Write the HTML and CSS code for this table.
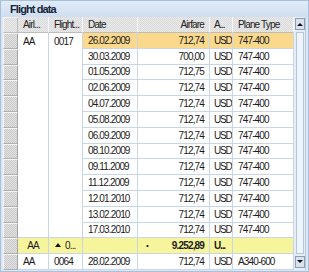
FILE: index.html
```html
<!DOCTYPE html>
<html lang="en">
<head>
    <meta charset="UTF-8">
    <title>Flight data</title>
    <link rel="stylesheet" href="styles.css">
</head>
<body>
    <div class="panel">
        <div class="panel-title">Flight data</div>

        <div class="grid">
            <!-- vertical scrollbar, spans the whole grid height -->
            <div class="vscroll">
                <div class="sb-btn"><span class="arrow-up"></span></div>
                <div class="sb-track"><div class="sb-thumb"></div></div>
                <div class="sb-btn"><span class="arrow-down"></span></div>
            </div>

            <!-- header -->
            <div class="sel sel-hd"></div>
            <div class="hd">Airl...</div>
            <div class="hd">Flight...</div>
            <div class="hd">Date</div>
            <div class="hd num">Airfare</div>
            <div class="hd cur">A...</div>
            <div class="hd">Plane Type</div>

            <!-- group AA 0017 -->
            <div class="sel"></div>
            <div class="cell grp">AA</div>
            <div class="cell grp">0017</div>
            <div class="cell selected">26.02.2009</div>
            <div class="cell num selected">712,74</div>
            <div class="cell cur selected">USD</div>
            <div class="cell selected">747-400</div>

            <div class="sel"></div>
            <div class="cell">30.03.2009</div>
            <div class="cell num">700,00</div>
            <div class="cell cur">USD</div>
            <div class="cell">747-400</div>

            <div class="sel"></div>
            <div class="cell">01.05.2009</div>
            <div class="cell num">712,75</div>
            <div class="cell cur">USD</div>
            <div class="cell">747-400</div>

            <div class="sel"></div>
            <div class="cell">02.06.2009</div>
            <div class="cell num">712,74</div>
            <div class="cell cur">USD</div>
            <div class="cell">747-400</div>

            <div class="sel"></div>
            <div class="cell">04.07.2009</div>
            <div class="cell num">712,74</div>
            <div class="cell cur">USD</div>
            <div class="cell">747-400</div>

            <div class="sel"></div>
            <div class="cell">05.08.2009</div>
            <div class="cell num">712,74</div>
            <div class="cell cur">USD</div>
            <div class="cell">747-400</div>

            <div class="sel"></div>
            <div class="cell">06.09.2009</div>
            <div class="cell num">712,74</div>
            <div class="cell cur">USD</div>
            <div class="cell">747-400</div>

            <div class="sel"></div>
            <div class="cell">08.10.2009</div>
            <div class="cell num">712,74</div>
            <div class="cell cur">USD</div>
            <div class="cell">747-400</div>

            <div class="sel"></div>
            <div class="cell">09.11.2009</div>
            <div class="cell num">712,74</div>
            <div class="cell cur">USD</div>
            <div class="cell">747-400</div>

            <div class="sel"></div>
            <div class="cell">11.12.2009</div>
            <div class="cell num">712,74</div>
            <div class="cell cur">USD</div>
            <div class="cell">747-400</div>

            <div class="sel"></div>
            <div class="cell">12.01.2010</div>
            <div class="cell num">712,74</div>
            <div class="cell cur">USD</div>
            <div class="cell">747-400</div>

            <div class="sel"></div>
            <div class="cell">13.02.2010</div>
            <div class="cell num">712,74</div>
            <div class="cell cur">USD</div>
            <div class="cell">747-400</div>

            <div class="sel"></div>
            <div class="cell">17.03.2010</div>
            <div class="cell num">712,74</div>
            <div class="cell cur">USD</div>
            <div class="cell">747-400</div>

            <!-- subtotal row -->
            <div class="sel"></div>
            <div class="cell sum center">AA</div>
            <div class="cell sum"><span class="tri"></span>0...</div>
            <div class="cell sum"></div>
            <div class="cell sum total"><span class="dot">&bull;</span><b>9.252,89</b></div>
            <div class="cell sum cur"><b>U...</b></div>
            <div class="cell sum"></div>

            <!-- next group -->
            <div class="sel"></div>
            <div class="cell">AA</div>
            <div class="cell">0064</div>
            <div class="cell">28.02.2009</div>
            <div class="cell num">712,74</div>
            <div class="cell cur">USD</div>
            <div class="cell">A340-600</div>
        </div>
    </div>
</body>
</html>
```

FILE: styles.css
```css
body {
    margin: 0;
    background: #fff;
    font-family: "Liberation Sans", Arial, sans-serif;
    font-size: 10px;
    letter-spacing: -0.85px;
    color: #1b1b1b;
}

.panel {
    width: 309px;
    box-sizing: border-box;
    border: 1px solid #a9c0dd;
    background: #dde7f4;
    padding: 0 2px 1px;
}

.panel-title {
    height: 16px;
    line-height: 16px;
    margin: 0 -2px;
    padding-left: 9px;
    background: linear-gradient(#e1ebf7, #cfdef1);
    font-size: 11px;
    font-weight: bold;
    letter-spacing: -0.9px;
    color: #17243a;
}

.grid {
    display: grid;
    grid-template-columns: 15px 31px 34px 55px 72px 23px 61px 12px;
    grid-template-rows: 16px repeat(15, 15.8px);
    background: #fff;
}

.grid > div {
    box-sizing: border-box;
    overflow: hidden;
    white-space: nowrap;
}

.cell,
.hd {
    display: flex;
    align-items: center;
    padding: 0 5px;
    border-right: 1px solid #c8d6e8;
    border-bottom: 1px solid #c8d6e8;
}

.hd {
    background-color: #e3e3e3;
    background-image: repeating-conic-gradient(#d9d9d9 0 25%, #ebebeb 0 50%);
    background-size: 2px 2px;
    border-right-color: #f6f6f6;
    border-bottom-color: #bdbdbd;
    color: #222;
}

.num {
    justify-content: flex-end;
}

.cur {
    padding: 0 0 0 4px;
    letter-spacing: -1.15px;
}

.center {
    justify-content: center;
}

.grp {
    grid-row: span 13;
    align-items: flex-start;
    padding-top: 3px;
}

.selected {
    background: #fad98c;
}

.sum {
    background: #f7f59c;
}

.total {
    justify-content: space-between;
    padding-left: 8px;
}

.dot {
    font-size: 8px;
}

.tri {
    width: 0;
    height: 0;
    border-left: 3px solid transparent;
    border-right: 3px solid transparent;
    border-bottom: 4px solid #111;
    margin: 0 4px 1px 1px;
}

/* row selector buttons */
.sel {
    border: 1px solid;
    border-color: #f5f5f5 #a4a4a4 #b0b0b0 #f5f5f5;
    background-color: #d8d8d8;
    background-image: repeating-conic-gradient(#cacaca 0 25%, #e2e2e2 0 50%);
    background-size: 2px 2px;
}

.sel-hd {
    border-color: #f3f3f3 #bdbdbd #bdbdbd #f3f3f3;
    background-image: repeating-conic-gradient(#d9d9d9 0 25%, #ebebeb 0 50%);
}

/* scrollbar */
.vscroll {
    grid-column: 8;
    grid-row: 1 / -1;
    display: flex;
    flex-direction: column;
    gap: 1px;
    padding: 1px 0 2px 1px;
    background: #e6edf6;
    border-right: 1px solid #b9c9dd;
}

.sb-btn {
    height: 10px;
    border: 1px solid #8e9db0;
    background: #d9e3ef;
    display: flex;
    align-items: center;
    justify-content: center;
}

.arrow-up {
    border-left: 3px solid transparent;
    border-right: 3px solid transparent;
    border-bottom: 3px solid #111;
}

.arrow-down {
    border-left: 3px solid transparent;
    border-right: 3px solid transparent;
    border-top: 3px solid #111;
}

.sb-track {
    flex: 1;
    display: flex;
    padding: 1px 1px;
}

.sb-thumb {
    flex: 1;
    border: 1px solid #b5c6da;
    background: #eef4fb;
}
```
